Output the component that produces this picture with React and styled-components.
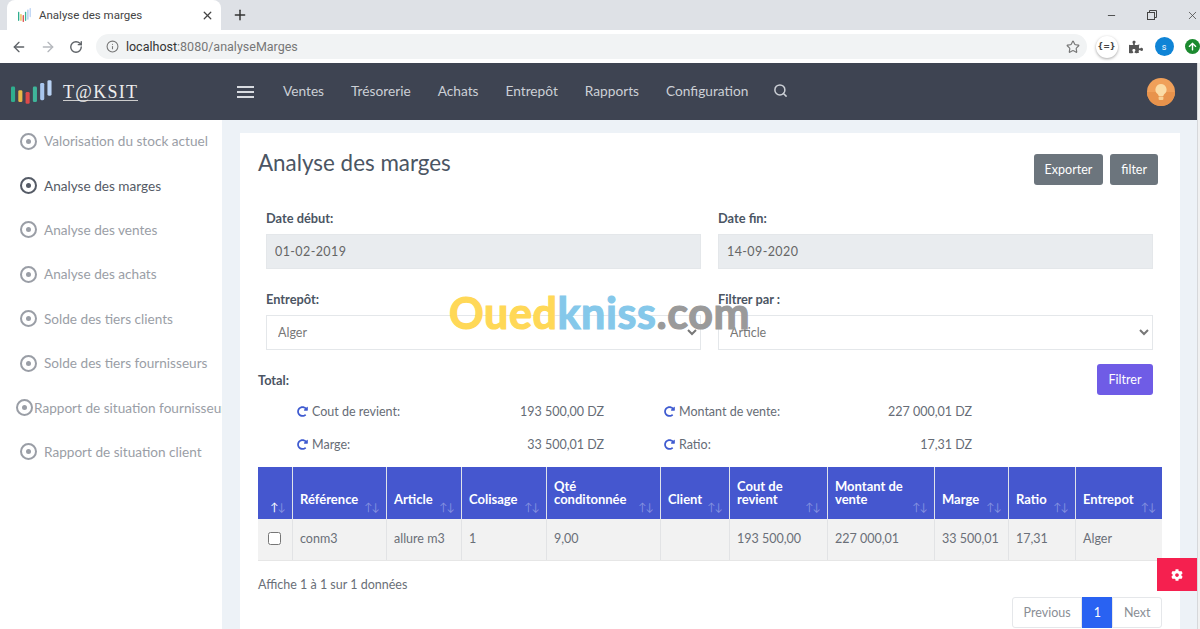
import React from 'react';
import styled, {createGlobalStyle} from 'styled-components';
import {ArrowLeft, ArrowRight, RotateCw, Info, Star, X, Plus, Minus, Search} from 'lucide-react';
import {FaPuzzlePiece, FaRedoAlt, FaCog, FaArrowUp} from 'react-icons/fa';

const GlobalStyle = createGlobalStyle`
  html, body { margin: 0; padding: 0; height: 100%; overflow: hidden; background: #fff; }
  body { font-family: Lato, "Noto Sans", sans-serif; }
  * { box-sizing: border-box; }
`;

const Page = styled.div`
  position: relative;
  width: 1200px;
  height: 629px;
  overflow: hidden;
  display: flex;
  flex-direction: column;
`;

const TabStrip = styled.div`
  height: 30px;
  background: #dee1e6;
  display: flex;
  align-items: flex-end;
  padding-left: 7px;
  color: #333;
`;

const Tab = styled.div`
  width: 214px;
  height: 30px;
  background: #fff;
  border-radius: 8px 8px 0 0;
  display: flex;
  align-items: center;
  padding: 0 7px 0 11px;
  gap: 8px;
  font: 11.5px Roboto, sans-serif;
  color: #444;
  > span { flex: 1; }
`;

const NewTab = styled.div`
  margin-left: 11px;
  height: 30px;
  display: flex;
  align-items: center;
`;

const WindowButtons = styled.div`
  margin-left: auto;
  height: 30px;
  display: flex;
  align-items: center;
  gap: 29.5px;
  padding-right: 1px;
  color: #444;
`;

const Toolbar = styled.div`
  height: 33px;
  background: #fff;
  display: flex;
  align-items: center;
  padding-left: 11px;
  color: #5f6368;
`;

const NavIcons = styled.div`
  display: flex;
  align-items: center;
  gap: 13px;
  width: 85px;
`;

const AddressBar = styled.div`
  width: 991px;
  height: 25px;
  background: #f1f3f4;
  border-radius: 13px;
  display: flex;
  align-items: center;
  padding: 0 7px 0 10px;
  gap: 7px;
  font: 12.5px Roboto, sans-serif;
  color: #777;
  b { font-weight: 400; color: #333; }
  > span { flex: 1; }
`;

const ExtensionIcons = styled.div`
  display: flex;
  align-items: center;
  margin-left: 9px;
  gap: 11.5px;
`;

const JsonBadge = styled.div`
  width: 22px;
  height: 22px;
  border-radius: 50%;
  background: #fff;
  box-shadow: 0 1px 3px rgba(0,0,0,.35);
  display: flex;
  align-items: center;
  justify-content: center;
  font: 700 8px "DejaVu Sans", sans-serif;
  color: #444;
`;

const Profile = styled.div`
  width: 19px;
  height: 19px;
  border-radius: 50%;
  background: #0f84d6;
  color: #fff;
  display: flex;
  align-items: center;
  justify-content: center;
  font: 9px Roboto, sans-serif;
`;

const UpdateBadge = styled.div`
  width: 15px;
  height: 15px;
  border-radius: 50%;
  background: #1b8a2f;
  color: #fff;
  display: flex;
  align-items: center;
  justify-content: center;
  font-size: 9px;
  flex-shrink: 0;
`;

const Frame = styled.div`
  flex: 1;
  display: flex;
  min-height: 0;
  background: #edf2f7;
`;

const Viewport = styled.div`
  width: 1197px;
  display: flex;
  flex-direction: column;
`;

const Header = styled.header`
  height: 57px;
  flex-shrink: 0;
  background: #3e4452;
  display: flex;
  align-items: center;
  color: #ccd0d6;
  font-size: 13.7px;
`;

const Brand = styled.div`
  width: 237px;
  padding-left: 11px;
  display: flex;
  align-items: center;
  gap: 11px;
`;

const BrandName = styled.span`
  font: 18px "Liberation Serif", serif;
  letter-spacing: 1.3px;
  color: #eee;
  border-bottom: 1px solid #ccc;
  line-height: 16px;
  margin-top: 2px;
`;

const Burger = styled.div`
  width: 17px;
  height: 12px;
  margin-right: 29px;
  border-top: 2px solid #d8dbe0;
  border-bottom: 2px solid #d8dbe0;
  display: flex;
  align-items: center;
  &::before { content: ""; width: 100%; height: 2px; background: #d8dbe0; }
`;

const TopNav = styled.nav`
  display: flex;
  align-items: center;
  gap: 27px;
  margin-top: -2px;
  > svg { margin-left: -2px; }
`;

const Avatar = styled.div`
  margin-left: auto;
  margin-right: 22px;
  width: 28px;
  height: 28px;
  display: flex;
`;

const Body = styled.div`
  flex: 1;
  display: flex;
  min-height: 0;
`;

const Sidebar = styled.aside`
  width: 222px;
  flex-shrink: 0;
  background: #fff;
  overflow: hidden;
`;

const SideItem = styled.div`
  height: 44.4px;
  padding-bottom: 2px;
  display: flex;
  align-items: center;
  white-space: nowrap;
  gap: ${p => (p.$long ? '1px' : '7px')};
  padding-left: ${p => (p.$long ? '16px' : '20px')};
  font-size: 13.6px;
  color: ${p => (p.$active ? '#555b66' : '#9a9ea6')};
`;

const Dot = styled.span`
  width: 17px;
  height: 17px;
  flex-shrink: 0;
  border-radius: 50%;
  border: 2px solid currentColor;
  display: flex;
  align-items: center;
  justify-content: center;
  &::after { content: ""; width: 5px; height: 5px; border-radius: 50%; background: currentColor; }
`;

const Main = styled.main`
  flex: 1;
  padding: 13px 17px 0 18px;
`;

const Card = styled.section`
  height: 520px;
  background: #fff;
  padding: 18px 18px 0 18px;
`;

const TitleRow = styled.div`
  display: flex;
  justify-content: space-between;
  align-items: flex-start;
  height: 60px;
  padding-right: 4px;
`;

const Title = styled.h1`
  margin: -1px 0 0;
  font-size: 22.4px;
  line-height: 26px;
  font-weight: 400;
  color: #4b5563;
`;

const ButtonGroup = styled.div`
  display: flex;
  gap: 7px;
  margin-top: 3px;
`;

const GreyButton = styled.button`
  height: 31px;
  padding: 0 11px;
  border: 0;
  border-radius: 3px;
  background: #6c757d;
  color: #fff;
  font: 12.5px Lato, sans-serif;
`;

const FormGrid = styled.div`
  display: grid;
  grid-template-columns: 435px 435px;
  column-gap: 17px;
  row-gap: 23px;
  padding: 0 0 0 8px;
`;

const Field = styled.div`
  display: flex;
  flex-direction: column;
  gap: 8px;
`;

const Label = styled.label`
  margin-top: -1px;
  font-size: 12.8px;
  line-height: 16px;
  font-weight: 700;
  color: #4b5563;
`;

const TextInput = styled.input`
  height: 35px;
  border: 1px solid #e4e7ea;
  background: #e9ecef;
  padding: 0 8px;
  font: 12.5px Lato, sans-serif;
  letter-spacing: .4px;
  color: #666;
  outline: 0;
`;

const Select = styled.select`
  height: 35px;
  border: 1px solid #e4e7ea;
  background: #fff;
  padding: 0 7px;
  font: 12.5px Lato, sans-serif;
  color: #777;
  outline: 0;
`;

const TotalRow = styled.div`
  display: flex;
  justify-content: space-between;
  margin-top: 14px;
  height: 31px;
  padding-right: 9px;
  > strong { font-size: 12.8px; font-weight: 700; color: #4b5563; padding-top: 8px; }
`;

const PurpleButton = styled.button`
  width: 56px;
  height: 31px;
  border: 0;
  border-radius: 3px;
  background: #6f5ce6;
  color: #fff;
  font: 12.5px Lato, sans-serif;
`;

const Totals = styled.div`
  display: grid;
  grid-template-columns: 307px 308px;
  column-gap: 60px;
  padding-left: 39px;
`;

const TotalItem = styled.div`
  height: 33px;
  display: flex;
  align-items: center;
  gap: 4px;
  font-size: 12.5px;
  color: #666c76;
  > svg { color: #3f5bd0; font-size: 11px; flex-shrink: 0; }
  > b { margin-left: auto; font-weight: 400; }
`;

const Table = styled.table`
  width: 904px;
  margin-top: 6px;
  border-collapse: collapse;
  table-layout: fixed;
  font-size: 12.5px;
`;

const Th = styled.th`
  height: 52px;
  padding: 0 7px 13px 7.5px;
  background: #4557cf;
  border-left: 1px solid #dfe3ea;
  color: #fff;
  text-align: left;
  vertical-align: bottom;
  font-size: 13px;
  line-height: 13px;
  font-weight: 700;
  &:first-child { border-left: 0; }
`;

const ThInner = styled.div`
  display: flex;
  justify-content: space-between;
  align-items: flex-end;
  gap: 2px;
`;

const SortArrows = styled.span`
  font-size: 11px;
  font-weight: 400;
  line-height: 11px;
  letter-spacing: -1px;
  margin-bottom: -6px;
  color: ${p => (p.$on ? '#fff' : 'rgba(255,255,255,.35)')};
  white-space: nowrap;
  flex-shrink: 0;
`;

const DimArrow = styled.span`
  color: rgba(255,255,255,.35);
`;

const Td = styled.td`
  height: 41px;
  padding: 0 7.5px 1px;
  background: #f2f2f2;
  border-left: 1px solid #e2e3e5;
  border-bottom: 1px solid #e6e6e6;
  color: #6a6f78;
  white-space: nowrap;
  &:first-child { border-left: 0; text-align: center; }
`;

const Check = styled.input`
  width: 13px;
  height: 13px;
  margin: 3px 0 0 0;
`;

const Showing = styled.div`
  margin-top: 16px;
  font-size: 12.5px;
  line-height: 16px;
  color: #6a6f78;
`;

const Pager = styled.div`
  width: 904px;
  margin-top: 4px;
  display: flex;
  justify-content: flex-end;
`;

const PageLink = styled.span`
  height: 31px;
  display: flex;
  align-items: center;
  padding: 0 10.5px;
  font-size: 12.5px;
  border: 1px solid ${p => (p.$current ? '#2962f2' : '#e5e7ea')};
  background: ${p => (p.$current ? '#2962f2' : '#fff')};
  color: ${p => (p.$current ? '#fff' : '#8a8e95')};
  &:first-child { border-radius: 3px 0 0 3px; }
  &:last-child { border-radius: 0 3px 3px 0; }
`;

const Scrollbar = styled.div`
  width: 3px;
  background: #f1f1f1;
  border-left: 1px solid #d6d8db;
`;

const SettingsTab = styled.div`
  position: absolute;
  left: 1157px;
  top: 558px;
  width: 40px;
  height: 33px;
  background: #f5204f;
  color: #fff;
  display: flex;
  align-items: center;
  justify-content: center;
  font-size: 12px;
`;

const Watermark = styled.div`
  position: absolute;
  left: 449px;
  top: 287px;
  font: 700 43px/52px Lato, sans-serif;
  letter-spacing: .6px;
  white-space: nowrap;
  pointer-events: none;
`;

const Mark = styled.span`
  color: ${p => p.$color};
  -webkit-text-stroke: 1.2px ${p => p.$color};
`;

function BarsLogo({width, height, fit}) {
  const bars = [
    [0, 7, 17, '#2fae8e'], [8, 11, 13, '#e8b948'], [16, 13, 13, '#dc4a4a'],
    [24, 7, 17, '#3fb59a'], [32, 3, 19, '#a8c6ee'], [40, 0, 17, '#b9d2f4'],
  ];
  return (
    <svg width={width} height={height} viewBox="0 0 45 26" preserveAspectRatio={fit}>
      {bars.map(([x, y, h, c]) => <rect key={x} x={x} y={y} width="4.5" height={h} rx="1.5" fill={c} />)}
    </svg>
  );
}

function Bulb() {
  return (
    <svg width="28" height="28" viewBox="0 0 28 28">
      <circle cx="14" cy="14" r="14" fill="#f0a05a" />
      <path d="M0 14a14 14 0 0 0 28 0z" fill="#e8934c" />
      <path d="M14 6a5.6 5.6 0 0 0-3.4 10c.7.6 1 1.2 1 2h4.8c0-.8.3-1.4 1-2A5.6 5.6 0 0 0 14 6z" fill="#fbdca6" />
      <rect x="11.6" y="18.4" width="4.8" height="3.6" rx="1" fill="#f8d196" />
    </svg>
  );
}

const columns = [
  {w: 34, label: '', on: true},
  {w: 94, label: 'Référence'},
  {w: 75, label: 'Article'},
  {w: 85, label: 'Colisage'},
  {w: 114, label: <>Qté<br />conditonnée</>},
  {w: 69, label: 'Client'},
  {w: 98, label: <>Cout de<br />revient</>},
  {w: 107, label: <>Montant de<br />vente</>},
  {w: 74, label: 'Marge'},
  {w: 67, label: 'Ratio'},
  {w: 87, label: 'Entrepot'},
];

const sideItems = [
  'Valorisation du stock actuel', 'Analyse des marges', 'Analyse des ventes', 'Analyse des achats',
  'Solde des tiers clients', 'Solde des tiers fournisseurs', 'Rapport de situation fournisseur', 'Rapport de situation client',
];

export default function App() {
  return (
    <Page>
      <GlobalStyle />
      <TabStrip>
        <Tab>
          <BarsLogo width={13} height={14} fit="none" />
          <span>Analyse des marges</span>
          <X size={13} strokeWidth={2.4} />
        </Tab>
        <NewTab><Plus size={16} strokeWidth={2.2} /></NewTab>
        <WindowButtons>
          <Minus size={11} />
          <svg width="10" height="10" viewBox="0 0 10 10" fill="none" stroke="currentColor">
            <rect x=".5" y="2.5" width="7" height="7" />
            <path d="M2.5 2.5v-2h7v7h-2" />
          </svg>
          <X size={13} strokeWidth={1.4} />
        </WindowButtons>
      </TabStrip>
      <Toolbar>
        <NavIcons>
          <ArrowLeft size={16} />
          <ArrowRight size={16} color="#b5b8bd" />
          <RotateCw size={14} strokeWidth={2.4} />
        </NavIcons>
        <AddressBar>
          <Info size={13} />
          <span><b>localhost</b>:8080/analyseMarges</span>
          <Star size={14} />
        </AddressBar>
        <ExtensionIcons>
          <JsonBadge>{'{=}'}</JsonBadge>
          <FaPuzzlePiece size={14} color="#555" />
          <Profile>s</Profile>
          <UpdateBadge><FaArrowUp /></UpdateBadge>
        </ExtensionIcons>
      </Toolbar>
      <Frame>
        <Viewport>
          <Header>
            <Brand>
              <BarsLogo width={41} height={24} />
              <BrandName>T@KSIT</BrandName>
            </Brand>
            <Burger />
            <TopNav>
              <span>Ventes</span>
              <span>Trésorerie</span>
              <span>Achats</span>
              <span>Entrepôt</span>
              <span>Rapports</span>
              <span>Configuration</span>
              <Search size={15} strokeWidth={2.4} />
            </TopNav>
            <Avatar><Bulb /></Avatar>
          </Header>
          <Body>
            <Sidebar>
              {sideItems.map((item, i) => (
                <SideItem key={item} $active={i === 1} $long={i === 6}>
                  <Dot />
                  {item}
                </SideItem>
              ))}
            </Sidebar>
            <Main>
              <Card>
                <TitleRow>
                  <Title>Analyse des marges</Title>
                  <ButtonGroup>
                    <GreyButton>Exporter</GreyButton>
                    <GreyButton>filter</GreyButton>
                  </ButtonGroup>
                </TitleRow>
                <FormGrid>
                  <Field>
                    <Label>Date début:</Label>
                    <TextInput readOnly value="01-02-2019" />
                  </Field>
                  <Field>
                    <Label>Date fin:</Label>
                    <TextInput readOnly value="14-09-2020" />
                  </Field>
                  <Field>
                    <Label>Entrepôt:</Label>
                    <Select defaultValue="Alger"><option>Alger</option></Select>
                  </Field>
                  <Field>
                    <Label>Filtrer par :</Label>
                    <Select defaultValue="Article"><option>Article</option></Select>
                  </Field>
                </FormGrid>
                <TotalRow>
                  <strong>Total:</strong>
                  <PurpleButton>Filtrer</PurpleButton>
                </TotalRow>
                <Totals>
                  <TotalItem><FaRedoAlt />Cout de revient:<b>193 500,00 DZ</b></TotalItem>
                  <TotalItem><FaRedoAlt />Montant de vente:<b>227 000,01 DZ</b></TotalItem>
                  <TotalItem><FaRedoAlt />Marge:<b>33 500,01 DZ</b></TotalItem>
                  <TotalItem><FaRedoAlt />Ratio:<b>17,31 DZ</b></TotalItem>
                </Totals>
                <Table>
                  <colgroup>
                    {columns.map((c, i) => <col key={i} width={c.w} />)}
                  </colgroup>
                  <thead>
                    <tr>
                      {columns.map((c, i) => (
                        <Th key={i}>
                          <ThInner>
                            <span>{c.label}</span>
                            <SortArrows $on={c.on}>↑<DimArrow>↓</DimArrow></SortArrows>
                          </ThInner>
                        </Th>
                      ))}
                    </tr>
                  </thead>
                  <tbody>
                    <tr>
                      <Td><Check type="checkbox" /></Td>
                      <Td>conm3</Td>
                      <Td>allure m3</Td>
                      <Td>1</Td>
                      <Td>9,00</Td>
                      <Td />
                      <Td>193 500,00</Td>
                      <Td>227 000,01</Td>
                      <Td>33 500,01</Td>
                      <Td>17,31</Td>
                      <Td>Alger</Td>
                    </tr>
                  </tbody>
                </Table>
                <Showing>Affiche 1 à 1 sur 1 données</Showing>
                <Pager>
                  <PageLink>Previous</PageLink>
                  <PageLink $current>1</PageLink>
                  <PageLink>Next</PageLink>
                </Pager>
              </Card>
            </Main>
          </Body>
        </Viewport>
        <Scrollbar />
      </Frame>
      <SettingsTab><FaCog /></SettingsTab>
      <Watermark>
        <Mark $color="#ffd857">Oued</Mark>
        <Mark $color="#85c8ea">kniss</Mark>
        <Mark $color="#9a9a9a">.com</Mark>
      </Watermark>
    </Page>
  );
}
